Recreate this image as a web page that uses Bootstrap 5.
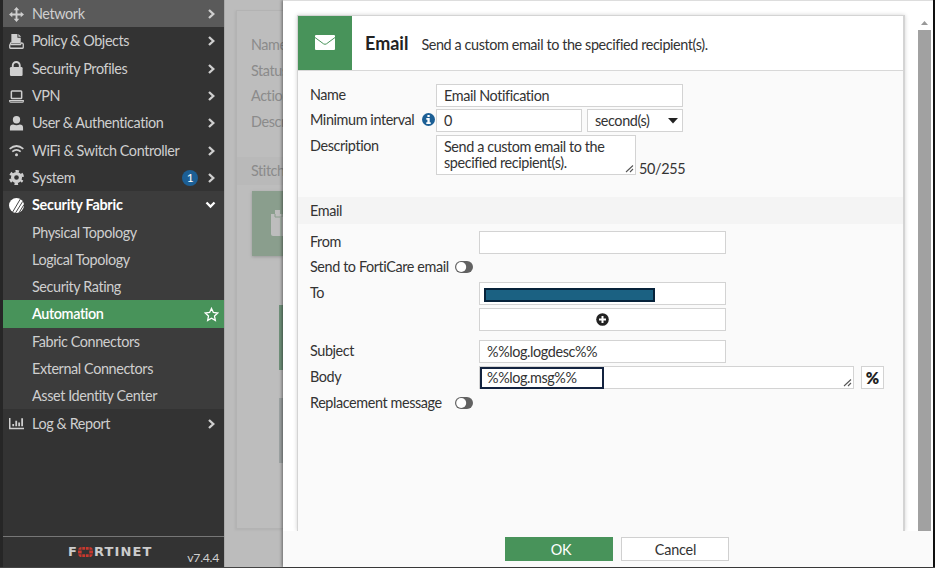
<!DOCTYPE html>
<html lang="en">
<head>
<meta charset="utf-8">
<meta name="viewport" content="width=device-width, initial-scale=1">
<title>Automation - Email action</title>
<link href="https://cdn.jsdelivr.net/npm/bootstrap@5.3.0/dist/css/bootstrap.min.css" rel="stylesheet">
<style>
  body { font-family: Lato, "Liberation Sans", sans-serif; font-size: 14.4px; letter-spacing: -.4px; line-height: 18px; color: #333; width: 935px; height: 568px; background: #fafafa; }
  .shell { height: 567px; }
  .base-line { height: 1px; background: #444; }

  /* sidebar */
  .side { width: 224px; background: #333; border-left: 3px solid #262626; color: #cfcfcf; }
  .side a { height: 27.3px; padding: 1px 8px 0 6px; color: inherit; text-decoration: none; flex: none; }
  .side a > svg:first-child { width: 15px; height: 15px; margin-right: 8px; flex: none; }
  .side .sub { padding-left: 29px; }
  .side .chev { width: 9px; height: 10px; }
  .side .hot { background: #5a5a5a; }
  .side .opened { background: #3c3c3c; }
  .side .opened .top { color: #fff; font-weight: 700; letter-spacing: -.25px; }
  .side .chosen { background: #48935a; color: #fff; font-weight: 600; padding-right: 5px; }
  .count { width: 16px; height: 16px; line-height: 16px; font-size: 12px; background: #1c5f95; color: #fff; margin-right: 9px; }
  .side-foot { border-top: 1px solid #777; height: 31px; padding: 0 5px 0 65px; }
  .brand { font: 700 13px/14px "DejaVu Sans", sans-serif; letter-spacing: 1.1px; color: #ccc; height: 14px; margin-top: 8px; }
  .brand svg { width: 15px; height: 10px; margin: 0 1px 0 0; }
  .ver { font-size: 12.3px; letter-spacing: -.3px; line-height: 14px; padding-bottom: 2px; }

  /* dimmed page */
  .dimmed { width: 59px; background: #bcbcbc; color: #8b8b8b; padding: 10px 0 38px 12px; box-shadow: inset 1px 0 #aaa; }
  .sheet { border: 1px solid #b3b3b3; border-right: 0; background: #bdbdbd; padding-top: 25px; box-shadow: -1px 1px 2px #b0b0b0; }
  .sheet span { padding-left: 14px; height: 25.7px; white-space: nowrap; }
  .sheet .stitch { height: 28px; margin-top: 18px; padding-top: 5px; background: #b9b9b9; }
  .tile { background: #8a9e8d; height: 65px; margin: 6px 0 0 15px; padding: 19px 0 0 19px; box-shadow: 0 1px 3px #999; }
  .tile svg { width: 24px; height: 26px; }
  .stub { width: 4px; height: 65px; margin-top: 49px; background: #70917a; }
  .stub + .stub { margin-top: 28px; background: #9da3a3; }

  /* slide-in panel */
  .panel { width: 650px; background: #fff; border-top: 1px solid #ddd; box-shadow: -1px 0 3px rgba(0,0,0,.45); position: relative; }
  .edge { width: 2px; background: #111; }
  .sheet-area { height: 530px; padding: 14px 0 0 14px; overflow: hidden; }
  .form-box { width: 607.5px; background: #fafafa; border: 1px solid #d4d4d4; border-width: 1px 2px 0 1px; box-shadow: 0 0 4px rgba(0,0,0,.18); }
  .head { height: 54.5px; background: #fff; border-bottom: 1px solid #d8d8d8; }
  .head-icon { width: 54px; height: 54px; background: #48935a; }
  .head h1 { font-size: 18px; letter-spacing: 0; line-height: 22px; font-weight: 700; margin: 0 13px 0 13px; color: #222; }
  .fields { padding-left: 12px; }
  .fields.first { padding-top: 13px; height: 126px; }
  .wide { padding-top: 7px; }
  .line { height: 25.7px; }
  .after-list { margin-top: 7px; }
  .lab { padding-top: 2px; width: 126px; white-space: nowrap; }
  .wide .lab { width: 169px; }
  .toggle { margin: 3px 6.500px 0 auto; }
  .info { margin: 2px 1px 0 0; }
  .box { height: 23px; background: #fff; border: 1px solid #d3d3d3; padding: 1px 7px; line-height: 19px; white-space: nowrap; }
  .full { width: 246.5px; }
  .num { width: 146px; }
  .unit { width: 96px; margin-left: 5px; padding-right: 4px; }
  .area { width: 200px; height: 40px; line-height: 16.3px; padding-top: 3px; white-space: normal; }
  .body-area { width: 375px; }
  .grip { position: absolute; right: 1px; bottom: 1px; width: 9px; height: 9px; }
  .counter { padding: 25px 0 0 3px; letter-spacing: -.35px; }
  .pct { width: 23px; margin-left: 7px; padding: 1px 0 0; font-size: 16px; font-weight: 800; color: #222; text-align: center; letter-spacing: 0; }
  .band { height: 27px; background: #f4f4f4; padding: 5px 12px; }
  .redact { width: 171px; height: 14px; border: 2px solid #06223a; background: #1b6182; margin: 4px 0 0 -3px; }
  .frame { position: absolute; left: 0; top: 0; width: 124px; height: 22px; border: 2px solid #13233f; }
  .bar { width: 13px; margin-left: auto; margin-right: 2px; padding-top: 6px; }
  .thumb { width: 12.5px; margin-top: 5px; background: #a1a1a1; }
  .foot { height: 36px; background: #fafafa; padding: 6px 0 0 222px; }
  .act { width: 108px; height: 24px; padding: 0 0 0 1px; line-height: 21px; font-size: inherit; letter-spacing: -.2px; border-radius: 0; border: 1px solid #d0d0d0; background: #fff; color: #333; }
  .act.ok { background: #48935a; border-color: #48935a; color: #fff; padding-left: 4px; }
</style>
<script src="https://cdn.jsdelivr.net/npm/bootstrap@5.3.0/dist/js/bootstrap.bundle.min.js"></script>
</head>
<body class="overflow-hidden">
<svg class="d-none">
  <symbol id="chev" viewBox="0 0 9 10"><path d="M2 1l4.300 4L2 9" fill="none" stroke="currentColor" stroke-width="2.300"/></symbol>
  <symbol id="grip" viewBox="0 0 9 9"><path d="M1 8l7-6.500M5 8l3-3" fill="none" stroke="#555" stroke-width="1.100"/></symbol>
  <symbol id="switch" viewBox="0 0 18 12"><rect width="18" height="12" rx="6" fill="#626262"/><circle cx="6.200" cy="6" r="5" fill="#fff"/></symbol>
</svg>
<div class="shell d-flex">
  <nav class="side d-flex flex-column flex-shrink-0">
    <a href="#" class="hot d-flex align-items-center"><svg viewBox="0 0 16 16" fill="currentColor"><path d="M8 0l3 3.500H9V7h3.500V5L16 8l-3.500 3V9H9v3.500h2L8 16l-3-3.500h2V9H3.500v2L0 8l3.500-3v2H7V3.500H5z"/></svg><span>Network</span><svg class="chev ms-auto"><use href="#chev"/></svg></a>
    <a href="#" class="d-flex align-items-center"><svg viewBox="0 0 16 16"><path d="M2.500 0H9v4h3.500v6h-10z" fill="currentColor"/><path d="M10 0l3 3h-3z" fill="currentColor"/><path d="M2.500 8.500L.8 12v2.500q0 .7.700.7h13q.7 0 .7-.7V11q0-1.500-2-1.500l-1 1.800H2" fill="none" stroke="currentColor" stroke-width="1.400"/></svg><span>Policy &amp; Objects</span><svg class="chev ms-auto"><use href="#chev"/></svg></a>
    <a href="#" class="d-flex align-items-center"><svg viewBox="0 0 16 16"><rect x="1" y="6.500" width="13.500" height="9.500" rx="1.300" fill="currentColor"/><path d="M4 7V4.800a3.700 3.700 0 0 1 7.500 0V7" fill="none" stroke="currentColor" stroke-width="2"/></svg><span>Security Profiles</span><svg class="chev ms-auto"><use href="#chev"/></svg></a>
    <a href="#" class="d-flex align-items-center"><svg viewBox="0 0 16 16" fill="none" stroke="currentColor"><rect x="2.500" y="2" width="11" height="8" rx=".8" stroke-width="1.600"/><path d="M.7 12.200h14.600v.8q0 1-1 1H1.700q-1 0-1-1z" stroke-width="1.200"/></svg><span>VPN</span><svg class="chev ms-auto"><use href="#chev"/></svg></a>
    <a href="#" class="d-flex align-items-center"><svg viewBox="0 0 16 16" fill="currentColor"><circle cx="8" cy="4" r="3.900"/><path d="M1 15.500v-3Q1 9 4.500 9q3.500 1.500 7 0Q15 9 15 12.500v3z"/></svg><span>User &amp; Authentication</span><svg class="chev ms-auto"><use href="#chev"/></svg></a>
    <a href="#" class="d-flex align-items-center"><svg viewBox="0 0 16 16" fill="none" stroke="currentColor" stroke-width="1.800"><path d="M.7 6.300q7.300-6.200 14.600 0M3.500 9.300q4.500-3.800 9 0"/><circle cx="8" cy="12.500" r="1.600" fill="currentColor" stroke="none"/></svg><span>WiFi &amp; Switch Controller</span><svg class="chev ms-auto"><use href="#chev"/></svg></a>
    <a href="#" class="d-flex align-items-center"><svg viewBox="0 0 16 16" fill="none" stroke="currentColor"><circle cx="8" cy="8" r="4.200" stroke-width="3.400"/><circle cx="8" cy="8" r="6.700" stroke-width="2.600" stroke-dasharray="3.500 3.516" stroke-dashoffset="1.750" transform="rotate(30 8 8)"/></svg><span>System</span><span class="count rounded-circle text-center ms-auto">1</span><svg class="chev"><use href="#chev"/></svg></a>
    <div class="opened">
      <a href="#" class="top d-flex align-items-center"><svg viewBox="0 0 16 16"><circle cx="8" cy="8" r="8" fill="currentColor"/><path d="M4 14.800L12 1.200M7 15.800l7.500-12M10.500 16L16 7" stroke="#3c3c3c" stroke-width="1"/></svg><span>Security Fabric</span><svg class="ms-auto" width="11" height="8" viewBox="0 0 11 8"><path d="M1.500 1.500l4 4 4-4" fill="none" stroke="currentColor" stroke-width="2.300"/></svg></a>
      <a href="#" class="sub d-flex align-items-center">Physical Topology</a>
      <a href="#" class="sub d-flex align-items-center">Logical Topology</a>
      <a href="#" class="sub d-flex align-items-center">Security Rating</a>
      <a href="#" class="sub chosen d-flex align-items-center">Automation<svg class="ms-auto me-0" viewBox="0 0 16 16" width="15" height="15"><path d="M8 1.500l2 4.300 4.700.6-3.500 3.200.9 4.700L8 12l-4.100 2.300.9-4.700L1.300 6.400 6 5.800z" fill="none" stroke="currentColor" stroke-width="1.400"/></svg></a>
      <a href="#" class="sub d-flex align-items-center">Fabric Connectors</a>
      <a href="#" class="sub d-flex align-items-center">External Connectors</a>
      <a href="#" class="sub d-flex align-items-center">Asset Identity Center</a>
    </div>
    <a href="#" class="d-flex align-items-center"><svg viewBox="0 0 16 16" fill="none" stroke="currentColor"><path d="M.8 2v11.200H16" stroke-width="1.600"/><path d="M4.500 11V8.500M7.700 11V5M10.800 11V7M14 11V2.500" stroke-width="1.900"/></svg><span>Log &amp; Report</span><svg class="chev ms-auto"><use href="#chev"/></svg></a>
    <div class="side-foot mt-auto d-flex justify-content-between">
      <div class="brand d-flex align-items-center"><span>F</span><svg viewBox="0 0 15 10" fill="#c8392f"><path d="M4.300 0h2.800v2.800H4.300zM7.900 0h2.800v2.800H7.900zM4.300 7.200h2.800V10H4.300zM7.900 7.200h2.800V10H7.900zM0 3.600h3.700v2.800H0zM11.300 3.600H15v2.800h-3.700zM3.500 0v2.800H.3Q.5 0 3.500 0zM11.500 0v2.800h3.200q-.2-2.800-3.200-2.800zM3.500 10V7.200H.3q.2 2.800 3.200 2.800zM11.500 10V7.200h3.200q-.2 2.800-3.200 2.800z"/></svg><span>RTINET</span></div>
      <div class="ver align-self-end">v7.4.4</div>
    </div>
  </nav>

  <div class="dimmed flex-shrink-0 overflow-hidden">
    <div class="sheet h-100 d-flex flex-column">
      <span>Name</span><span>Status</span><span>Action</span><span>Descri</span>
      <span class="stitch">Stitch</span>
      <div class="tile"><svg viewBox="0 0 24 26" fill="#bdbdbd"><path d="M0 4h4V0h5v4h15v22H2q-2 0-2-2z"/><path d="M10 8v18M4 4v3h7V4" stroke="#8a9e8d" fill="none"/></svg></div>
      <div class="stub ms-auto"></div><div class="stub ms-auto"></div>
    </div>
  </div>

  <main class="panel flex-shrink-0">
    <div class="sheet-area d-flex">
      <div class="form-box">
        <div class="head d-flex align-items-center">
          <div class="head-icon d-flex align-items-center justify-content-center"><svg width="20" height="15" viewBox="0 0 20 15"><rect width="20" height="15" rx="1" fill="#fff"/><path d="M0 2.500l8.500 6.300q1.500 1 3 0L20 2.500" fill="none" stroke="#48935a"/></svg></div>
          <h1>Email</h1><span class="pt-1">Send a custom email to the specified recipient(s).</span>
        </div>
        <div class="fields first">
          <div class="line d-flex"><div class="lab">Name</div><div class="box full">Email Notification</div></div>
          <div class="line d-flex">
            <div class="lab d-flex align-items-start justify-content-between">Minimum interval<svg class="info flex-shrink-0" width="13" height="13" viewBox="0 0 13 13"><circle cx="6.500" cy="6.500" r="6.500" fill="#1c5f95"/><path d="M5.400 2h2.300v2H5.400zM4.300 5h3.400v4.300h1V11H4.300V9.300h1.100V6.700H4.300z" fill="#fff"/></svg></div>
            <div class="box num">0</div>
            <div class="box unit d-flex align-items-center justify-content-between">second(s)<svg width="10" height="6" viewBox="0 0 10 6"><path d="M0 0h10L5 5.500z" fill="#222"/></svg></div>
          </div>
          <div class="line d-flex align-items-start"><div class="lab">Description</div><div class="box area position-relative">Send a custom email to the specified recipient(s).<svg class="grip"><use href="#grip"/></svg></div><span class="counter">50/255</span></div>
        </div>
        <div class="band">Email</div>
        <div class="fields wide">
          <div class="line d-flex"><div class="lab">From</div><div class="box full"></div></div>
          <div class="line d-flex"><div class="lab d-flex align-items-start">Send to FortiCare email<svg class="toggle" width="18" height="12"><use href="#switch"/></svg></div></div>
          <div class="line d-flex"><div class="lab">To</div><div class="box full"><div class="redact"></div></div></div>
          <div class="line d-flex"><div class="lab"></div><div class="box full d-flex align-items-center justify-content-center"><svg width="13" height="13" viewBox="0 0 13 13"><circle cx="6.500" cy="6.500" r="6.300" fill="#222"/><path d="M6.500 3v7M3 6.500h7" stroke="#fff" stroke-width="2"/></svg></div></div>
          <div class="line after-list d-flex"><div class="lab">Subject</div><div class="box full">%%log.logdesc%%</div></div>
          <div class="line d-flex"><div class="lab">Body</div><div class="box body-area position-relative">%%log.msg%%<div class="frame"></div><svg class="grip"><use href="#grip"/></svg></div><div class="box pct">%</div></div>
          <div class="line d-flex"><div class="lab d-flex align-items-start">Replacement message<svg class="toggle" width="18" height="12"><use href="#switch"/></svg></div></div>
        </div>
      </div>
      <div class="bar d-flex flex-column align-items-center">
        <svg width="7" height="4" viewBox="0 0 7 4"><path d="M0 4l3.500-4L7 4z" fill="#999"/></svg>
        <div class="thumb flex-grow-1"></div>
      </div>
    </div>
    <div class="foot d-flex gap-2">
      <button class="btn act ok">OK</button><button class="btn act">Cancel</button>
    </div>
  </main>
  <div class="edge"></div>
</div>
<div class="base-line"></div>
</body>
</html>
